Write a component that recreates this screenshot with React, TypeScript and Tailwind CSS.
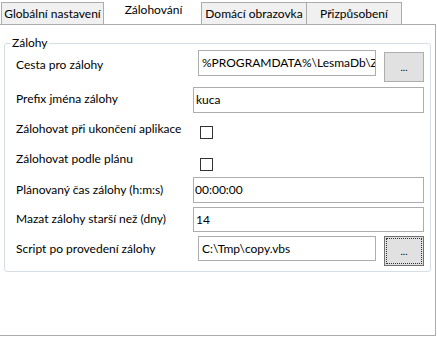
const font = { fontFamily: 'Lato, "Noto Sans", sans-serif' };

const TextBox = ({ value, className }: { value: string; className: string }) => (
  <div
    className={`${className} flex items-center overflow-hidden whitespace-nowrap border border-[#abadb3] bg-white text-[12px] text-black`}
  >
    {value}
  </div>
);

const CheckBox = ({ top }: { top: string }) => (
  <div className={`${top} h-[13px] w-[13px] border border-[#333333] bg-white`} />
);

export default function App() {
  return (
    <div className="h-[343px] w-[437px] overflow-hidden bg-white text-[12px] text-black" style={font}>
      {/* tabs */}
      <div className="flex h-[24px] items-start pl-[1px] pt-[2px]">
        <div className="flex h-[22px] w-[103px] items-center justify-center border border-b-0 border-[#acacac] bg-[#f0f0f0]">
          Globální nastavení
        </div>
        <div className="-mt-[2px] flex h-[24px] w-[97px] items-center justify-center pb-[4px] pl-[2px]">
          Zálohování
        </div>
        <div className="flex h-[22px] w-[106px] items-center justify-center border border-b-0 border-[#acacac] bg-[#f0f0f0]">
          Domácí obrazovka
        </div>
        <div className="flex h-[22px] w-[95px] items-center justify-center border border-b-0 border-l-0 border-[#acacac] bg-[#f0f0f0]">
          Přizpůsobení
        </div>
      </div>

      {/* tab panel */}
      <div className="h-[312px] w-[436px] border border-l-0 border-[#acacac] pt-[18px]">
        <div className="relative ml-[4px] h-[229px] w-[427px] rounded-[3px] border border-[#d5dfe5]">
          <div className="absolute -top-[9px] left-[6px] bg-white px-[1px] leading-[16px]">Zálohy</div>

          <div className="flex flex-col pl-[11px] leading-[16px]">
            <div className="mt-[6px] flex h-[32px] items-start">
              <div className="mt-[7px] w-[182px]">Cesta pro zálohy</div>
              <TextBox value="%PROGRAMDATA%\LesmaDb\Za" className="h-[26px] w-[178px] pl-[3px]" />
              <div className="ml-[8px] mt-[2px] flex h-[30px] w-[40px] items-center justify-center border border-[#adadad] bg-[#e1e1e1] text-[10px]">
                ...
              </div>
            </div>

            <div className="mt-[5px] flex h-[26px] items-start">
              <div className="mt-[4px] w-[177px]">Prefix jména zálohy</div>
              <TextBox value="kuca" className="h-[26px] w-[231px] pl-[2px]" />
            </div>

            <div className="mt-[8px] flex h-[18px] items-start">
              <div className="w-[184px]">Zálohovat při ukončení aplikace</div>
              <CheckBox top="mt-[5px]" />
            </div>

            <div className="mt-[12px] flex h-[20px] items-start">
              <div className="w-[184px]">Zálohovat podle plánu</div>
              <CheckBox top="mt-[7px]" />
            </div>

            <div className="mt-[6px] flex h-[26px] items-start">
              <div className="mt-[5px] w-[177px]">Plánovaný čas zálohy (h:m:s)</div>
              <TextBox value="00:00:00" className="h-[26px] w-[231px] pl-[1px]" />
            </div>

            <div className="mt-[4px] flex h-[25px] items-start">
              <div className="mt-[4px] w-[177px]">Mazat zálohy starší než (dny)</div>
              <TextBox value="14" className="h-[25px] w-[231px] pl-[2px]" />
            </div>

            <div className="mt-[4px] flex h-[30px] items-start">
              <div className="mt-[5px] w-[182px]">Script po provedení zálohy</div>
              <TextBox value="C:\Tmp\copy.vbs" className="h-[25px] w-[178px] pl-[3px]" />
              <div className="ml-[8px] flex h-[30px] w-[40px] items-center justify-center border border-[#707070] bg-[#e1e1e1] p-[1px]">
                <div className="flex h-full w-full items-center justify-center border border-dotted border-[#333333] text-[10px]">
                  ...
                </div>
              </div>
            </div>
          </div>
        </div>
      </div>
    </div>
  );
}
